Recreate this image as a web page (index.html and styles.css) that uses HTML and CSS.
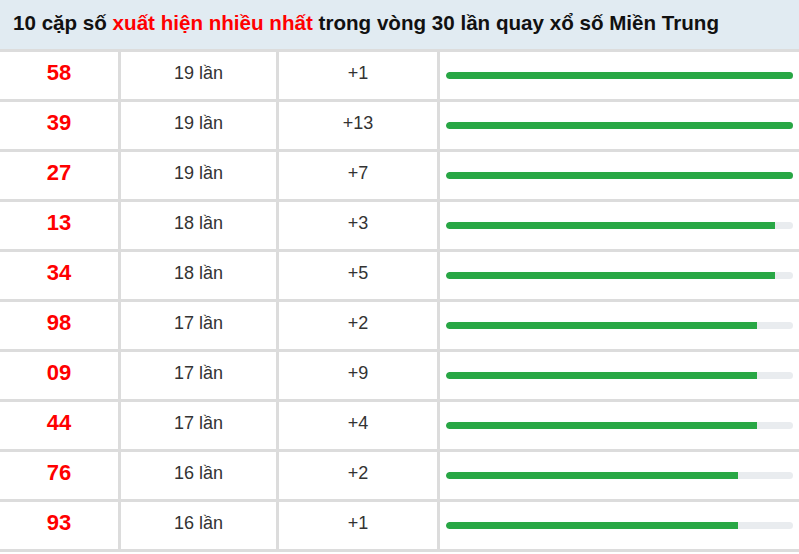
FILE: index.html
```html
<!DOCTYPE html>
<html lang="vi">
<head>
<meta charset="utf-8">
<title>10 cặp số xuất hiện nhiều nhất</title>
<link rel="stylesheet" href="styles.css">
</head>
<body>
<div class="panel">
  <div class="panel-head">10 cặp số <span class="hl">xuất hiện nhiều nhất</span> trong vòng 30 lần quay xổ số Miền Trung</div>
  <div class="stats">
    <div class="c num">58</div><div class="c">19 lần</div><div class="c">+1</div><div class="c bar-cell"><div class="track"><div class="fill" style="width:100%"></div></div></div>
    <div class="c num">39</div><div class="c">19 lần</div><div class="c">+13</div><div class="c bar-cell"><div class="track"><div class="fill" style="width:100%"></div></div></div>
    <div class="c num">27</div><div class="c">19 lần</div><div class="c">+7</div><div class="c bar-cell"><div class="track"><div class="fill" style="width:100%"></div></div></div>
    <div class="c num">13</div><div class="c">18 lần</div><div class="c">+3</div><div class="c bar-cell"><div class="track"><div class="fill" style="width:94.7%"></div></div></div>
    <div class="c num">34</div><div class="c">18 lần</div><div class="c">+5</div><div class="c bar-cell"><div class="track"><div class="fill" style="width:94.7%"></div></div></div>
    <div class="c num">98</div><div class="c">17 lần</div><div class="c">+2</div><div class="c bar-cell"><div class="track"><div class="fill" style="width:89.5%"></div></div></div>
    <div class="c num">09</div><div class="c">17 lần</div><div class="c">+9</div><div class="c bar-cell"><div class="track"><div class="fill" style="width:89.5%"></div></div></div>
    <div class="c num">44</div><div class="c">17 lần</div><div class="c">+4</div><div class="c bar-cell"><div class="track"><div class="fill" style="width:89.5%"></div></div></div>
    <div class="c num">76</div><div class="c">16 lần</div><div class="c">+2</div><div class="c bar-cell"><div class="track"><div class="fill" style="width:84.2%"></div></div></div>
    <div class="c num">93</div><div class="c">16 lần</div><div class="c">+1</div><div class="c bar-cell"><div class="track"><div class="fill" style="width:84.2%"></div></div></div>
  </div>
</div>
</body>
</html>
```
FILE: styles.css
```css
html, body {
  margin: 0;
  padding: 0;
  background: #fff;
}
body {
  font-family: "Liberation Sans", Arial, sans-serif;
  color: #333;
}
.panel {
  width: 799px;
}
.panel-head {
  height: 49px;
  line-height: 46px;
  padding-left: 13px;
  background: #e1ebf2;
  border-bottom: 3px solid #dcdcdc;
  font-size: 20.6px;
  font-weight: bold;
  color: #111;
  white-space: nowrap;
}
.hl {
  color: #f00;
}
.stats {
  display: grid;
  grid-template-columns: 121px 158px 161px 1fr;
  grid-auto-rows: 50px;
}
.c {
  display: flex;
  align-items: center;
  justify-content: center;
  padding-bottom: 4px;
  border-bottom: 3px solid #dcdcdc;
  border-right: 3px solid #dcdcdc;
  font-size: 18px;
  color: #333;
}
.c.bar-cell {
  border-right: none;
  justify-content: stretch;
  padding: 0 6px;
}
.num {
  color: #f00;
  font-weight: bold;
  font-size: 22px;
  padding-bottom: 5px;
}
.track {
  flex: 1;
  height: 7px;
  background: #e9ecef;
  border-radius: 4px;
  overflow: hidden;
}
.fill {
  height: 100%;
  background: #28a745;
  border-radius: 4px 0 0 4px;
}
```
